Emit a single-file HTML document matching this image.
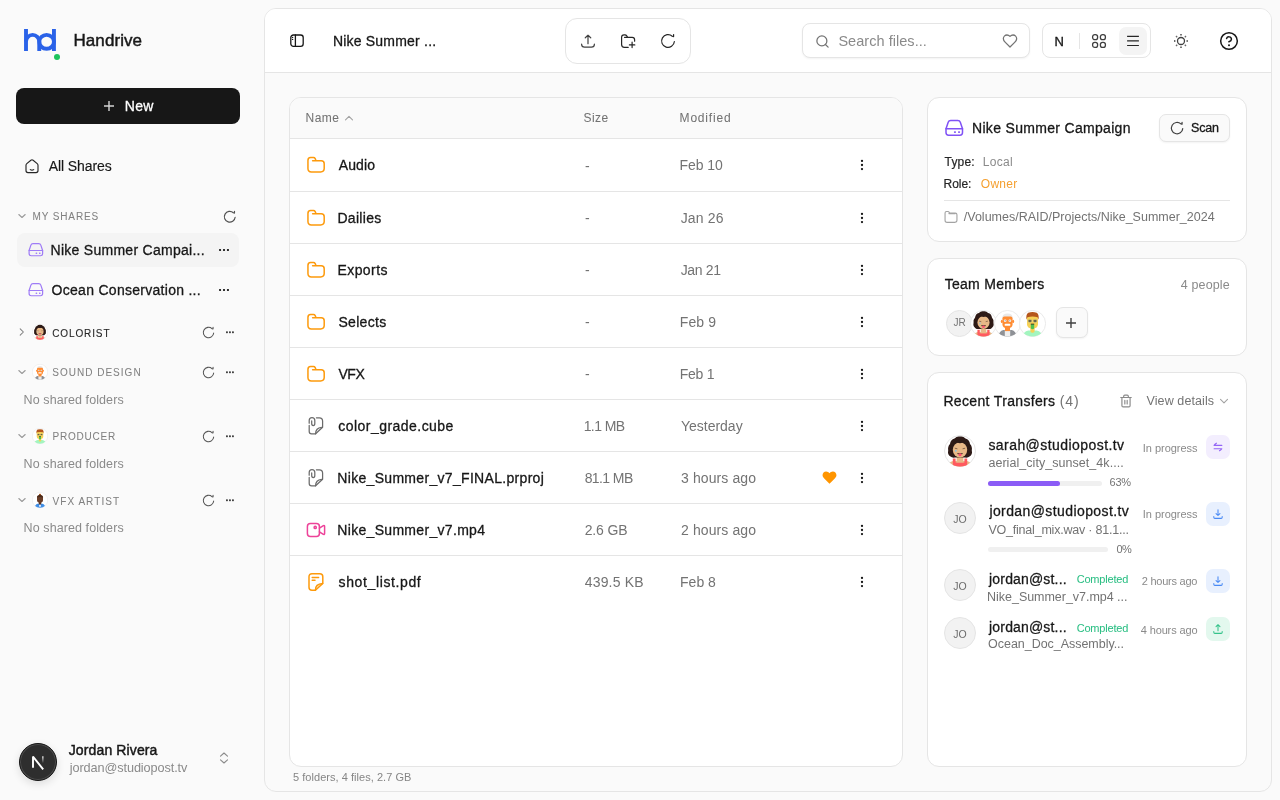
<!DOCTYPE html>
<html><head><meta charset="utf-8">
<style>
*{box-sizing:border-box;margin:0;padding:0}
html,body{width:1280px;height:800px;overflow:hidden}
body{background:#fafafa;font-family:"Liberation Sans",sans-serif;color:#171717;position:relative}
.a{position:absolute}
.t{position:absolute;white-space:nowrap;height:20px;line-height:20px}
svg{position:absolute;overflow:visible}
.ic{fill:none;stroke:currentColor;stroke-linecap:round;stroke-linejoin:round}
</style></head><body style="will-change:transform">

<svg width="0" height="0" style="position:absolute">
<defs>
<symbol id="drv" viewBox="0 0 26 24"><g fill="none" stroke="currentColor" stroke-linecap="round" stroke-linejoin="round"><path d="M5 12.8L7.2 6.3Q7.8 4.5 9.7 4.5H16.8Q18.7 4.5 19.3 6.3L21.5 12.8V16.6Q21.5 19.2 18.9 19.2H7.6Q5 19.2 5 16.6Z"/><path d="M5 12.8H21.5"/><path d="M13.8 16.1h.3M17.9 16.1h.3" stroke-width="1.9"/></g></symbol>
<symbol id="rf" viewBox="0 0 16 16"><path d="M14.38 8.56A6.4 6.4 0 1 1 12.28 3.24L13.6 3.65V1.5" fill="none" stroke="currentColor" stroke-linecap="round" stroke-linejoin="round"/></symbol>
<clipPath id="cc"><circle cx="16" cy="16" r="15.4"/></clipPath>
<symbol id="av-w" viewBox="0 0 32 32">
 <circle cx="16" cy="16" r="15.5" fill="#fff" stroke="#e3e3e3" stroke-width="0.9"/>
 <g clip-path="url(#cc)">
  <path d="M3.5 32Q4.5 27 9 26H23Q27.5 27 28.5 32Z" fill="#e8b887"/>
  <path d="M8.8 23.5H11.6V27.5H20.4V23.5H23.2V32H8.8Z" fill="#ff5a5f"/>
  <rect x="12.6" y="19" width="6.8" height="8.5" fill="#e8b887"/>
  <path d="M6.5 21.5Q3.2 19.5 4.2 15.5Q3.5 11.5 6 9Q6.5 4.5 10.5 3.5Q13 0.8 16 1.6Q19 0.8 21.5 3.5Q25.5 4.5 26 9Q28.5 11.5 27.8 15.5Q28.8 19.5 25.5 21.5Q24 23 21 22.5L11 22.5Q8 23 6.5 21.5Z" fill="#2d1a16"/>
  <ellipse cx="16" cy="14.8" rx="7.2" ry="7.6" fill="#e8b887"/>
  <path d="M8.8 10.5Q12 6.5 16 8.2Q20 6.5 23.2 10.5Q23 6 16 5.5Q9 6 8.8 10.5Z" fill="#2d1a16"/>
  <path d="M10.8 13.2L13.4 13.8M18.6 13.8L21.2 13.2" stroke="#7a5a44" stroke-width="0.9"/>
  <circle cx="11.8" cy="15.8" r="0.9" fill="#7ec8f2"/>
  <path d="M13 18.2H19L18.2 19.2H13.8Z" fill="#3b2a22"/>
  <ellipse cx="16" cy="19.8" rx="1.6" ry="1.5" fill="#ff4f73"/>
 </g>
</symbol>
<symbol id="av-b" viewBox="0 0 32 32">
 <circle cx="16" cy="16" r="15.5" fill="#fff" stroke="#e3e3e3" stroke-width="0.9"/>
 <g clip-path="url(#cc)">
  <path d="M5 32Q6 25 11 23.8H21Q26 25 27 32Z" fill="#8e9196"/>
  <path d="M12.8 24H19.2V32H12.8Z" fill="#eeeeee"/>
  <rect x="13" y="19" width="6" height="6" fill="#ff8c33"/>
  <path d="M9.8 10Q9.6 4.2 16 4.2Q22.4 4.2 22.2 10Z" fill="#e9e9e9"/>
  <path d="M10 10Q10 7.6 12.4 7.6H19.6Q22 7.6 22 10V17Q22 21.8 16 21.8Q10 21.8 10 17Z" fill="#ff8c33"/>
  <ellipse cx="9.3" cy="13.5" rx="1.2" ry="1.8" fill="#ff8c33"/><ellipse cx="22.7" cy="13.5" rx="1.2" ry="1.8" fill="#ff8c33"/>
  <ellipse cx="13.2" cy="12.8" rx="1.6" ry="1.4" fill="#fff"/><ellipse cx="18.8" cy="12.8" rx="1.6" ry="1.4" fill="#fff"/>
  <circle cx="13.2" cy="12.8" r="0.6" fill="#4a5a6a"/><circle cx="18.8" cy="12.8" r="0.6" fill="#4a5a6a"/>
  <rect x="12.6" y="16.4" width="6.8" height="2.4" rx="1" fill="#fff"/>
 </g>
</symbol>
<symbol id="av-g" viewBox="0 0 32 32">
 <circle cx="16" cy="16" r="15.5" fill="#fff" stroke="#e3e3e3" stroke-width="0.9"/>
 <g clip-path="url(#cc)">
  <path d="M4 32Q5 25.5 11 24.2H21Q27 25.5 28 32Z" fill="#a3f5bf"/>
  <rect x="13.5" y="19" width="5" height="8" rx="2" fill="#f6d155"/>
  <path d="M9.5 9Q9.5 6 12.5 6H19.5Q22.5 6 22.5 9V17Q22.5 22 16 22Q9.5 22 9.5 17Z" fill="#f6d155"/>
  <path d="M8.8 11.5Q8 5 11 3.2Q16 1.5 21 3.2Q24 5 23.2 11.5L22 8.5Q16 7 10 8.5Z" fill="#b5561c"/>
  <ellipse cx="13" cy="13" rx="2.4" ry="1.7" fill="#5f5b3c" stroke="#f1e4b0" stroke-width="0.5"/><ellipse cx="19" cy="13" rx="2.4" ry="1.7" fill="#5f5b3c" stroke="#f1e4b0" stroke-width="0.5"/>
  <path d="M14 16.5H18V22Q16 23.5 14 22Z" fill="#4fbf4f"/>
  <rect x="14" y="16.2" width="4" height="1" fill="#3b2a22"/>
 </g>
</symbol>
<symbol id="av-v" viewBox="0 0 32 32">
 <circle cx="16" cy="16" r="15.5" fill="#fff" stroke="#e3e3e3" stroke-width="0.9"/>
 <g clip-path="url(#cc)">
  <path d="M5 32Q6 25 11 23.5H21Q26 25 27 32Z" fill="#3f8ee6"/>
  <path d="M14 25H18L17 30H15Z" fill="#ffffff"/>
  <rect x="13.5" y="18" width="5" height="7" fill="#5a3220"/>
  <path d="M14 7.5V4Q16 2.5 18 4V7.5Z" fill="#a0521d"/>
  <path d="M10 11Q10 6 16 6Q22 6 22 11V16Q22 21.5 16 21.5Q10 21.5 10 16Z" fill="#6a3e28"/>
  <path d="M10 11Q10 6 16 6Q22 6 22 11Q16 8.5 10 11Z" fill="#4a2a1a"/>
 </g>
</symbol>
</defs></svg>

<!-- ============ SIDEBAR ============ -->
<svg class="a" style="left:0;top:0" width="80" height="70" viewBox="0 0 80 70">
  <g fill="none" stroke="#2a62e8" stroke-width="3.9">
    <path d="M26 29V51"/>
    <path d="M26 41.6A6.62 6.7 0 0 1 39.25 41.6V51"/>
    <ellipse cx="46.6" cy="41.85" rx="7.35" ry="6.95"/>
    <path d="M53.95 29V51"/>
  </g>
  <circle cx="57" cy="57" r="3" fill="#1ec45c"/>
</svg>
<div class="t" style="left:73.50px;top:31px;font-size:17px;letter-spacing:0.071px;-webkit-text-stroke:0.45px">Handrive</div>

<div class="a" style="left:16px;top:88px;width:224px;height:36px;background:#171717;border-radius:8px"></div>
<svg style="left:103px;top:100px" width="12" height="12" viewBox="0 0 12 12"><path d="M6 1V11M1 6H11" stroke="#d4d4d4" stroke-width="1.4" fill="none"/></svg>
<div class="t" style="left:124.70px;top:96px;font-size:14px;color:#fff;letter-spacing:0.350px;-webkit-text-stroke:0.3px">New</div>

<svg class="ic" style="left:24px;top:158px;color:#262626" width="16" height="16" viewBox="0 0 16 16" stroke-width="1.15">
  <path d="M2 7.2Q2 6.3 2.8 5.6L6.9 2.2Q8 1.3 9.1 2.2L13.2 5.6Q14 6.3 14 7.2V12.6Q14 14.6 12 14.6H4Q2 14.6 2 12.6Z"/>
  <path d="M6.3 11.6Q8 12.8 9.7 11.6"/>
</svg>
<div class="t" style="left:48.80px;top:156px;font-size:14px;letter-spacing:-0.100px;-webkit-text-stroke:0.15px">All Shares</div>

<!-- MY SHARES -->
<svg class="ic" style="left:17px;top:212px;color:#999" width="10" height="10" viewBox="0 0 10 10" stroke-width="1.05"><path d="M1.8 2.5L5 5.5L8.2 2.5"/></svg>
<div class="t" style="left:32.50px;top:207px;font-size:10px;letter-spacing:0.875px;color:#808080;-webkit-text-stroke:0.05px">MY SHARES</div>
<svg style="left:223.25px;top:209.75px;color:#525252;stroke-width:1.4" width="13.5" height="13.5" viewBox="0 0 16 16"><use href="#rf"/></svg>

<div class="a" style="left:17px;top:233px;width:222px;height:34px;background:#f4f4f4;border-radius:8px"></div>
<svg style="left:24.9px;top:240.4px;color:#9f7cf6;stroke-width:1.5" width="21.3" height="19.7" viewBox="0 0 26 24"><use href="#drv"/></svg>
<div class="t" style="left:50.60px;top:240px;font-size:14px;letter-spacing:0.270px;-webkit-text-stroke:0.3px">Nike Summer Campai...</div>
<svg style="left:218px;top:248px" width="12" height="4" viewBox="0 0 12 4"><rect x="1" y="1" width="2.1" height="2.1" rx="0.8" fill="#171717"/><rect x="4.95" y="1" width="2.1" height="2.1" rx="0.8" fill="#171717"/><rect x="8.9" y="1" width="2.1" height="2.1" rx="0.8" fill="#171717"/></svg>

<svg style="left:24.9px;top:280.4px;color:#9f7cf6;stroke-width:1.5" width="21.3" height="19.7" viewBox="0 0 26 24"><use href="#drv"/></svg>
<div class="t" style="left:51.60px;top:280px;font-size:14px;letter-spacing:0.281px;-webkit-text-stroke:0.3px">Ocean Conservation ...</div>
<svg style="left:218px;top:288px" width="12" height="4" viewBox="0 0 12 4"><rect x="1" y="1" width="2.1" height="2.1" rx="0.8" fill="#171717"/><rect x="4.95" y="1" width="2.1" height="2.1" rx="0.8" fill="#171717"/><rect x="8.9" y="1" width="2.1" height="2.1" rx="0.8" fill="#171717"/></svg>


<!-- COLORIST -->
<svg class="ic" style="left:17px;top:327px;color:#808080" width="10" height="10" viewBox="0 0 10 10" stroke-width="1.05"><path d="M3.2 1.8L6.4 5L3.2 8.2"/></svg>
<div class="a" style="left:32px;top:324px;width:16px;height:16px" id="av-col"><svg width="16" height="16" viewBox="0 0 32 32" style="left:0;top:0"><use href="#av-w"/></svg></div>
<div class="t" style="left:52.20px;top:324px;font-size:10px;letter-spacing:0.886px;color:#262626;-webkit-text-stroke:0.1px">COLORIST</div>
<svg style="left:201.50px;top:325.50px;color:#525252;stroke-width:1.3" width="13" height="13" viewBox="0 0 16 16"><use href="#rf"/></svg>
<svg style="left:225px;top:331px" width="10" height="3" viewBox="0 0 10 3"><rect x="1.05" y="0.35" width="1.8" height="1.8" rx="0.6" fill="#333"/><rect x="4.05" y="0.35" width="1.8" height="1.8" rx="0.6" fill="#333"/><rect x="7.05" y="0.35" width="1.8" height="1.8" rx="0.6" fill="#333"/></svg>

<!-- SOUND DESIGN -->
<svg class="ic" style="left:17px;top:368px;color:#999" width="10" height="10" viewBox="0 0 10 10" stroke-width="1.05"><path d="M1.8 2.5L5 5.5L8.2 2.5"/></svg>
<div class="a" style="left:32px;top:364px;width:16px;height:16px" id="av-snd"><svg width="16" height="16" viewBox="0 0 32 32" style="left:0;top:0"><use href="#av-b"/></svg></div>
<div class="t" style="left:52.20px;top:363px;font-size:10px;letter-spacing:1.018px;color:#808080;-webkit-text-stroke:0.05px">SOUND DESIGN</div>
<svg style="left:201.50px;top:365.50px;color:#525252;stroke-width:1.3" width="13" height="13" viewBox="0 0 16 16"><use href="#rf"/></svg>
<svg style="left:225px;top:371px" width="10" height="3" viewBox="0 0 10 3"><rect x="1.05" y="0.35" width="1.8" height="1.8" rx="0.6" fill="#333"/><rect x="4.05" y="0.35" width="1.8" height="1.8" rx="0.6" fill="#333"/><rect x="7.05" y="0.35" width="1.8" height="1.8" rx="0.6" fill="#333"/></svg>
<div class="t" style="left:23.60px;top:390px;font-size:12.5px;color:#8a8a8a;letter-spacing:0.088px">No shared folders</div>

<!-- PRODUCER -->
<svg class="ic" style="left:17px;top:432px;color:#999" width="10" height="10" viewBox="0 0 10 10" stroke-width="1.05"><path d="M1.8 2.5L5 5.5L8.2 2.5"/></svg>
<div class="a" style="left:32px;top:428px;width:16px;height:16px" id="av-prd"><svg width="16" height="16" viewBox="0 0 32 32" style="left:0;top:0"><use href="#av-g"/></svg></div>
<div class="t" style="left:52.50px;top:427px;font-size:10px;letter-spacing:0.786px;color:#808080;-webkit-text-stroke:0.05px">PRODUCER</div>
<svg style="left:201.50px;top:429.50px;color:#525252;stroke-width:1.3" width="13" height="13" viewBox="0 0 16 16"><use href="#rf"/></svg>
<svg style="left:225px;top:435px" width="10" height="3" viewBox="0 0 10 3"><rect x="1.05" y="0.35" width="1.8" height="1.8" rx="0.6" fill="#333"/><rect x="4.05" y="0.35" width="1.8" height="1.8" rx="0.6" fill="#333"/><rect x="7.05" y="0.35" width="1.8" height="1.8" rx="0.6" fill="#333"/></svg>
<div class="t" style="left:23.60px;top:454px;font-size:12.5px;color:#8a8a8a;letter-spacing:0.088px">No shared folders</div>

<!-- VFX ARTIST -->
<svg class="ic" style="left:17px;top:496px;color:#999" width="10" height="10" viewBox="0 0 10 10" stroke-width="1.05"><path d="M1.8 2.5L5 5.5L8.2 2.5"/></svg>
<div class="a" style="left:32px;top:492px;width:16px;height:16px" id="av-vfx"><svg width="16" height="16" viewBox="0 0 32 32" style="left:0;top:0"><use href="#av-v"/></svg></div>
<div class="t" style="left:52.50px;top:492px;font-size:10px;letter-spacing:1.056px;color:#808080;-webkit-text-stroke:0.05px">VFX ARTIST</div>
<svg style="left:201.50px;top:493.50px;color:#525252;stroke-width:1.3" width="13" height="13" viewBox="0 0 16 16"><use href="#rf"/></svg>
<svg style="left:225px;top:499px" width="10" height="3" viewBox="0 0 10 3"><rect x="1.05" y="0.35" width="1.8" height="1.8" rx="0.6" fill="#333"/><rect x="4.05" y="0.35" width="1.8" height="1.8" rx="0.6" fill="#333"/><rect x="7.05" y="0.35" width="1.8" height="1.8" rx="0.6" fill="#333"/></svg>
<div class="t" style="left:23.60px;top:518px;font-size:12.5px;color:#8a8a8a;letter-spacing:0.088px">No shared folders</div>

<!-- USER -->
<div class="a" style="left:19px;top:743px;width:38px;height:38px;border-radius:50%;background:#2e2e2e;border:1px solid #161616;box-shadow:inset 0 0 0 1px #4d4d4d,0 3px 8px rgba(0,0,0,0.12)"></div>
<svg style="left:28px;top:752px" width="20" height="20" viewBox="0 0 20 20"><defs><linearGradient id="ng" x1="0" y1="0" x2="0" y2="1"><stop offset="0" stop-color="#fff"/><stop offset="1" stop-color="#fff" stop-opacity="0"/></linearGradient></defs><path d="M5 15.7V4.6L15.2 17.3" stroke="#fff" stroke-width="1.9" stroke-linejoin="bevel" fill="none"/><rect x="14.2" y="4.3" width="1.3" height="6.8" fill="url(#ng)"/></svg>
<div class="t" style="left:68.75px;top:740px;font-size:14px;letter-spacing:0.121px;-webkit-text-stroke:0.45px">Jordan Rivera</div>
<div class="t" style="left:69.75px;top:758px;font-size:12.7px;color:#8a8a8a;letter-spacing:-0.092px">jordan@studiopost.tv</div>
<svg class="ic" style="left:218px;top:752px;color:#8a8a8a" width="12" height="12" viewBox="0 0 12 12" stroke-width="1.1"><path d="M2.5 4.2L6 1L9.5 4.2M2.5 7.8L6 11L9.5 7.8"/></svg>

<!-- ============ MAIN PANEL ============ -->
<div class="a" style="left:264px;top:8px;width:1008px;height:784px;border:1px solid #e5e5e5;border-radius:12px;background:#fafafa"></div>
<div class="a" style="left:265px;top:9px;width:1006px;height:64px;background:#fff;border-bottom:1px solid #e5e5e5;border-radius:11px 11px 0 0"></div>

<svg class="ic" style="left:289px;top:33px;color:#171717" width="16" height="16" viewBox="0 0 16 16" stroke-width="1.3">
  <rect x="1.8" y="2" width="12.4" height="11.4" rx="2.6"/><path d="M6.4 2V13.4"/><path d="M3.6 4.4h.01M3.6 6.4h.01" stroke-width="1.4"/>
</svg>
<div class="t" style="left:332.90px;top:31px;font-size:14px;letter-spacing:0.207px;-webkit-text-stroke:0.3px">Nike Summer ...</div>

<div class="a" style="left:565px;top:18px;width:126px;height:46px;border:1px solid #e5e5e5;border-radius:12px;background:#fff"></div>
<svg class="ic" style="left:580px;top:33px;color:#404040" width="16" height="16" viewBox="0 0 16 16" stroke-width="1.2">
  <path d="M8 10.7V2.4M5.2 4.9Q6.6 3.2 8 2.2Q9.4 3.2 10.8 4.9"/><path d="M1.6 11.2Q1.6 14.2 4.6 14.2H11.4Q14.4 14.2 14.4 11.2"/>
</svg>
<svg class="ic" style="left:620px;top:33px;color:#262626" width="16" height="16" viewBox="0 0 16 16" stroke-width="1.2">
  <path d="M7.6 4.4L6.7 2.9Q6.1 1.9 4.9 1.9H4Q1.6 1.9 1.6 4.3V11.6Q1.6 14.4 4.4 14.4H8.2"/><path d="M4.6 4.4H12.2Q14.6 4.4 14.6 6.8V8.2"/><path d="M12.1 9.2V14.6M9.4 11.9H14.8"/>
</svg>
<svg style="left:660.00px;top:32.90px;color:#262626;stroke-width:1.2" width="16" height="16" viewBox="0 0 16 16"><use href="#rf"/></svg>

<div class="a" style="left:802px;top:23px;width:228px;height:35px;border:1px solid #e5e5e5;border-radius:8px;background:#fff;box-shadow:0 1px 2px rgba(0,0,0,0.05)"></div>
<svg class="ic" style="left:815px;top:34px;color:#737373" width="15" height="15" viewBox="0 0 24 24" stroke-width="2"><circle cx="11" cy="11" r="8"/><path d="m21 21-4.3-4.3"/></svg>
<div class="t" style="left:838.40px;top:31px;font-size:14.5px;color:#8a8a8a;letter-spacing:0.043px">Search files...</div>
<svg class="ic" style="left:1002px;top:33px;color:#737373" width="16" height="16" viewBox="0 0 24 24" stroke-width="1.9"><path d="M19 14c1.49-1.46 3-3.21 3-5.5A5.5 5.5 0 0 0 16.5 3c-1.76 0-3 .5-4.5 2-1.5-1.5-2.74-2-4.5-2A5.5 5.5 0 0 0 2 8.5c0 2.3 1.5 4.05 3 5.5l7 7Z"/></svg>

<div class="a" style="left:1042px;top:23px;width:109px;height:35px;border:1px solid #e5e5e5;border-radius:8px;background:#fff"></div>
<div class="t" style="left:1054.60px;top:32px;font-size:13px;-webkit-text-stroke:0.35px">N</div>
<div class="a" style="left:1079px;top:33px;width:1px;height:16px;background:#e5e5e5"></div>
<svg class="ic" style="left:1091px;top:33px;color:#404040" width="16" height="16" viewBox="0 0 16 16" stroke-width="1.3">
  <rect x="1.6" y="1.6" width="5" height="5" rx="2.2"/><rect x="9.4" y="1.6" width="5" height="5" rx="2.2"/><rect x="1.6" y="9.4" width="5" height="5" rx="2.2"/><rect x="9.4" y="9.4" width="5" height="5" rx="2.2"/>
</svg>
<div class="a" style="left:1119px;top:27px;width:28px;height:28px;border-radius:7px;background:#f4f4f4"></div>
<svg class="ic" style="left:1125px;top:33px;color:#262626;stroke-linecap:butt" width="16" height="16" viewBox="0 0 16 16" stroke-width="1.2"><path d="M2.1 3.4H13.9M2.1 7.9H13.9M2.1 12.5H13.9" style="stroke-linecap:butt"/></svg>

<svg class="ic" style="left:1173px;top:33px;color:#404040" width="16" height="16" viewBox="0 0 16 16" stroke-width="1.3">
  <circle cx="8" cy="8" r="3.5"/><path d="M7.8 1.7h.4M7.8 14.2h.4M1.7 7.8v.4M14.2 7.8v.4M3.5 3.5l.2.2M12.3 12.3l.2.2M3.5 12.5l.2-.2M12.3 3.7l.2-.2" stroke-width="1.4" style="stroke-linecap:square;stroke:#6a6a6a"/>
</svg>
<svg class="ic" style="left:1219px;top:31px;color:#171717" width="20" height="20" viewBox="0 0 24 24" stroke-width="1.8"><circle cx="12" cy="12" r="10"/><path d="M9.09 9a3 3 0 0 1 5.83 1c0 2-3 3-3 3"/><path d="M12 17h.01" stroke-width="2.4"/></svg>


<!-- ============ TABLE ============ -->
<div class="a" style="left:289px;top:97px;width:614px;height:670px;border:1px solid #e5e5e5;border-radius:12px;background:#fff;overflow:hidden"><div class="a" style="left:0;top:0;width:612px;height:41px;background:#fafafa;border-bottom:1px solid #e5e5e5"></div></div>
<div class="t" style="left:305.50px;top:108px;font-size:12px;color:#737373;letter-spacing:0.500px;-webkit-text-stroke:0.05px">Name</div>
<svg class="ic" style="left:344px;top:114px;color:#a3a3a3" width="10" height="8" viewBox="0 0 10 8" stroke-width="1.1"><path d="M1.5 5.8L5 2.3L8.5 5.8"/></svg>
<div class="t" style="left:583.50px;top:108px;font-size:12px;color:#737373;letter-spacing:0.433px;-webkit-text-stroke:0.05px">Size</div>
<div class="t" style="left:679.60px;top:108px;font-size:12px;color:#737373;letter-spacing:0.800px;-webkit-text-stroke:0.05px">Modified</div>
<div class="a" style="left:290px;top:191px;width:612px;height:1px;background:#e5e5e5"></div>
<svg class="ic" style="left:303px;top:153px;color:#fd9a0c" width="26" height="24" viewBox="0 0 26 24" stroke-width="1.5"><path d="M13 7.8L12.2 5.6Q11.6 4.5 10.5 4.5H7.5Q4.95 4.5 4.95 7.5V15.4Q4.95 18.7 8.4 18.9Q13 19.3 17.6 18.9Q21.2 18.6 21.2 15.4V10.8Q21.2 7.8 18.2 7.8H9.6"/></svg>
<div class="t" style="left:338.75px;top:155px;font-size:14px;letter-spacing:0.125px;-webkit-text-stroke:0.3px">Audio</div>
<div class="t" style="left:585.00px;top:156px;font-size:14px;color:#737373">-</div>
<div class="t" style="left:679.60px;top:155px;font-size:14px;color:#737373;letter-spacing:-0.060px">Feb 10</div>
<svg style="left:860px;top:159px" width="4" height="12" viewBox="0 0 4 12"><circle cx="2" cy="1.9" r="1.15" fill="#171717"/><circle cx="2" cy="6" r="1.15" fill="#171717"/><circle cx="2" cy="10.1" r="1.15" fill="#171717"/></svg>
<div class="a" style="left:290px;top:243px;width:612px;height:1px;background:#e5e5e5"></div>
<svg class="ic" style="left:303px;top:206px;color:#fd9a0c" width="26" height="24" viewBox="0 0 26 24" stroke-width="1.5"><path d="M13 7.8L12.2 5.6Q11.6 4.5 10.5 4.5H7.5Q4.95 4.5 4.95 7.5V15.4Q4.95 18.7 8.4 18.9Q13 19.3 17.6 18.9Q21.2 18.6 21.2 15.4V10.8Q21.2 7.8 18.2 7.8H9.6"/></svg>
<div class="t" style="left:337.40px;top:208px;font-size:14px;letter-spacing:0.317px;-webkit-text-stroke:0.3px">Dailies</div>
<div class="t" style="left:585.00px;top:208px;font-size:14px;color:#737373">-</div>
<div class="t" style="left:680.70px;top:208px;font-size:14px;color:#737373;letter-spacing:0.160px">Jan 26</div>
<svg style="left:860px;top:212px" width="4" height="12" viewBox="0 0 4 12"><circle cx="2" cy="1.9" r="1.15" fill="#171717"/><circle cx="2" cy="6" r="1.15" fill="#171717"/><circle cx="2" cy="10.1" r="1.15" fill="#171717"/></svg>
<div class="a" style="left:290px;top:295px;width:612px;height:1px;background:#e5e5e5"></div>
<svg class="ic" style="left:303px;top:258px;color:#fd9a0c" width="26" height="24" viewBox="0 0 26 24" stroke-width="1.5"><path d="M13 7.8L12.2 5.6Q11.6 4.5 10.5 4.5H7.5Q4.95 4.5 4.95 7.5V15.4Q4.95 18.7 8.4 18.9Q13 19.3 17.6 18.9Q21.2 18.6 21.2 15.4V10.8Q21.2 7.8 18.2 7.8H9.6"/></svg>
<div class="t" style="left:337.40px;top:260px;font-size:14px;letter-spacing:0.450px;-webkit-text-stroke:0.3px">Exports</div>
<div class="t" style="left:585.00px;top:260px;font-size:14px;color:#737373">-</div>
<div class="t" style="left:680.70px;top:260px;font-size:14px;color:#737373;letter-spacing:-0.320px">Jan 21</div>
<svg style="left:860px;top:264px" width="4" height="12" viewBox="0 0 4 12"><circle cx="2" cy="1.9" r="1.15" fill="#171717"/><circle cx="2" cy="6" r="1.15" fill="#171717"/><circle cx="2" cy="10.1" r="1.15" fill="#171717"/></svg>
<div class="a" style="left:290px;top:347px;width:612px;height:1px;background:#e5e5e5"></div>
<svg class="ic" style="left:303px;top:310px;color:#fd9a0c" width="26" height="24" viewBox="0 0 26 24" stroke-width="1.5"><path d="M13 7.8L12.2 5.6Q11.6 4.5 10.5 4.5H7.5Q4.95 4.5 4.95 7.5V15.4Q4.95 18.7 8.4 18.9Q13 19.3 17.6 18.9Q21.2 18.6 21.2 15.4V10.8Q21.2 7.8 18.2 7.8H9.6"/></svg>
<div class="t" style="left:338.40px;top:312px;font-size:14px;letter-spacing:0.333px;-webkit-text-stroke:0.3px">Selects</div>
<div class="t" style="left:585.00px;top:312px;font-size:14px;color:#737373">-</div>
<div class="t" style="left:679.70px;top:312px;font-size:14px;color:#737373;letter-spacing:0.150px">Feb 9</div>
<svg style="left:860px;top:316px" width="4" height="12" viewBox="0 0 4 12"><circle cx="2" cy="1.9" r="1.15" fill="#171717"/><circle cx="2" cy="6" r="1.15" fill="#171717"/><circle cx="2" cy="10.1" r="1.15" fill="#171717"/></svg>
<div class="a" style="left:290px;top:399px;width:612px;height:1px;background:#e5e5e5"></div>
<svg class="ic" style="left:303px;top:362px;color:#fd9a0c" width="26" height="24" viewBox="0 0 26 24" stroke-width="1.5"><path d="M13 7.8L12.2 5.6Q11.6 4.5 10.5 4.5H7.5Q4.95 4.5 4.95 7.5V15.4Q4.95 18.7 8.4 18.9Q13 19.3 17.6 18.9Q21.2 18.6 21.2 15.4V10.8Q21.2 7.8 18.2 7.8H9.6"/></svg>
<div class="t" style="left:338.40px;top:364px;font-size:14px;letter-spacing:-0.450px;-webkit-text-stroke:0.3px">VFX</div>
<div class="t" style="left:585.00px;top:364px;font-size:14px;color:#737373">-</div>
<div class="t" style="left:679.70px;top:364px;font-size:14px;color:#737373;letter-spacing:-0.250px">Feb 1</div>
<svg style="left:860px;top:368px" width="4" height="12" viewBox="0 0 4 12"><circle cx="2" cy="1.9" r="1.15" fill="#171717"/><circle cx="2" cy="6" r="1.15" fill="#171717"/><circle cx="2" cy="10.1" r="1.15" fill="#171717"/></svg>
<div class="a" style="left:290px;top:451px;width:612px;height:1px;background:#e5e5e5"></div>
<svg class="ic" style="left:306px;top:416px;color:#6b6b6b" width="20" height="20" viewBox="0 0 20 20" stroke-width="1.25"><path d="M3.2 7.2V4.6Q3.2 1.6 6 1.6Q8.8 1.6 8.8 4.6V7.6Q8.8 9.7 7.25 9.7Q5.7 9.7 5.7 7.6V4.9"/><path d="M3.2 9.4V15.4Q3.2 17.8 5.6 17.8H9.6L16.6 11.2V5Q16.6 1.8 13.4 1.8H10.4"/><path d="M9.6 17.8Q9.6 12 15.6 11.4"/></svg>
<div class="t" style="left:338.30px;top:416px;font-size:14px;letter-spacing:0.460px;-webkit-text-stroke:0.3px">color_grade.cube</div>
<div class="t" style="left:583.70px;top:416px;font-size:14px;color:#737373;letter-spacing:-0.600px">1.1 MB</div>
<div class="t" style="left:681.00px;top:416px;font-size:14px;color:#737373;letter-spacing:-0.013px">Yesterday</div>
<svg style="left:860px;top:420px" width="4" height="12" viewBox="0 0 4 12"><circle cx="2" cy="1.9" r="1.15" fill="#171717"/><circle cx="2" cy="6" r="1.15" fill="#171717"/><circle cx="2" cy="10.1" r="1.15" fill="#171717"/></svg>
<div class="a" style="left:290px;top:503px;width:612px;height:1px;background:#e5e5e5"></div>
<svg class="ic" style="left:306px;top:468px;color:#6b6b6b" width="20" height="20" viewBox="0 0 20 20" stroke-width="1.25"><path d="M3.2 7.2V4.6Q3.2 1.6 6 1.6Q8.8 1.6 8.8 4.6V7.6Q8.8 9.7 7.25 9.7Q5.7 9.7 5.7 7.6V4.9"/><path d="M3.2 9.4V15.4Q3.2 17.8 5.6 17.8H9.6L16.6 11.2V5Q16.6 1.8 13.4 1.8H10.4"/><path d="M9.6 17.8Q9.6 12 15.6 11.4"/></svg>
<div class="t" style="left:337.30px;top:468px;font-size:14px;letter-spacing:0.312px;-webkit-text-stroke:0.3px">Nike_Summer_v7_FINAL.prproj</div>
<div class="t" style="left:584.70px;top:468px;font-size:14px;color:#737373;letter-spacing:-0.600px">81.1 MB</div>
<div class="t" style="left:681.00px;top:468px;font-size:14px;color:#737373;letter-spacing:0.100px">3 hours ago</div>
<svg style="left:822px;top:471px" width="15" height="13" viewBox="0 0 24 21"><path d="M12 20.5L3.5 12.2C1.5 10.2 0.8 8.6 0.8 6.6C0.8 3.4 3.3 0.8 6.5 0.8C8.8 0.8 10.6 2 12 3.8C13.4 2 15.2 0.8 17.5 0.8C20.7 0.8 23.2 3.4 23.2 6.6C23.2 8.6 22.5 10.2 20.5 12.2Z" fill="#ff9500"/></svg>
<svg style="left:860px;top:472px" width="4" height="12" viewBox="0 0 4 12"><circle cx="2" cy="1.9" r="1.15" fill="#171717"/><circle cx="2" cy="6" r="1.15" fill="#171717"/><circle cx="2" cy="10.1" r="1.15" fill="#171717"/></svg>
<div class="a" style="left:290px;top:555px;width:612px;height:1px;background:#e5e5e5"></div>
<svg class="ic" style="left:306px;top:521px;color:#ed4399" width="20" height="18" viewBox="0 0 20 18" stroke-width="1.5"><rect x="1.4" y="2.4" width="12" height="13" rx="3"/><path d="M13.4 7.2L17.4 4.6Q18.6 4.2 18.6 5.4V12.6Q18.6 13.8 17.4 13.4L13.4 10.8"/><circle cx="9.2" cy="6.4" r="1.1"/></svg>
<div class="t" style="left:337.30px;top:520px;font-size:14px;letter-spacing:0.312px;-webkit-text-stroke:0.3px">Nike_Summer_v7.mp4</div>
<div class="t" style="left:584.70px;top:520px;font-size:14px;color:#737373;letter-spacing:-0.140px">2.6 GB</div>
<div class="t" style="left:681.00px;top:520px;font-size:14px;color:#737373;letter-spacing:0.100px">2 hours ago</div>
<svg style="left:860px;top:524px" width="4" height="12" viewBox="0 0 4 12"><circle cx="2" cy="1.9" r="1.15" fill="#171717"/><circle cx="2" cy="6" r="1.15" fill="#171717"/><circle cx="2" cy="10.1" r="1.15" fill="#171717"/></svg>
<svg class="ic" style="left:306px;top:572px;color:#fd9a0c" width="20" height="20" viewBox="0 0 20 20" stroke-width="1.5"><path d="M9.4 18.2H6Q3 18.2 3 15.2V4.8Q3 1.8 6 1.8H13.8Q16.8 1.8 16.8 4.8V11.4Z"/><path d="M9.4 18.2Q9.4 12 16.6 11.6"/><path d="M6.2 5.4H12.6M6.2 8.2H9"/></svg>
<div class="t" style="left:338.60px;top:572px;font-size:14px;letter-spacing:0.617px;-webkit-text-stroke:0.3px">shot_list.pdf</div>
<div class="t" style="left:584.70px;top:572px;font-size:14px;color:#737373;letter-spacing:0.186px">439.5 KB</div>
<div class="t" style="left:680.00px;top:572px;font-size:14px;color:#737373;letter-spacing:0.025px">Feb 8</div>
<svg style="left:860px;top:576px" width="4" height="12" viewBox="0 0 4 12"><circle cx="2" cy="1.9" r="1.15" fill="#171717"/><circle cx="2" cy="6" r="1.15" fill="#171717"/><circle cx="2" cy="10.1" r="1.15" fill="#171717"/></svg>
<div class="t" style="left:293.00px;top:767px;font-size:11px;color:#858585;letter-spacing:0.040px">5 folders, 4 files, 2.7 GB</div>

<!-- ============ RIGHT PANEL ============ -->
<div class="a" style="left:927px;top:97px;width:320px;height:145px;border:1px solid #e5e5e5;border-radius:12px;background:#fff"></div>
<svg style="left:941px;top:116px;color:#8052f5;stroke-width:1.5" width="26" height="24" viewBox="0 0 26 24"><use href="#drv"/></svg>
<div class="t" style="left:972.00px;top:118px;font-size:14px;letter-spacing:0.316px;-webkit-text-stroke:0.3px">Nike Summer Campaign</div>
<div class="a" style="left:1159px;top:114px;width:71px;height:28px;border:1px solid #e5e5e5;border-radius:7px;background:#fafafa;box-shadow:0 1px 2px rgba(0,0,0,0.05)"></div>
<svg style="left:1169.90px;top:120.90px;color:#404040;stroke-width:1.35" width="14.2" height="14.2" viewBox="0 0 16 16"><use href="#rf"/></svg>
<div class="t" style="left:1191.00px;top:118px;font-size:12.5px;letter-spacing:-0.200px;-webkit-text-stroke:0.3px">Scan</div>
<div class="t" style="left:944.60px;top:152px;font-size:12px;color:#262626;letter-spacing:0.175px;-webkit-text-stroke:0.2px">Type:</div>
<div class="t" style="left:982.70px;top:152px;font-size:12px;color:#8a8a8a;letter-spacing:0.350px">Local</div>
<div class="t" style="left:943.60px;top:174px;font-size:12px;color:#262626;letter-spacing:-0.050px;-webkit-text-stroke:0.2px">Role:</div>
<div class="t" style="left:980.80px;top:174px;font-size:12px;color:#f5a030;letter-spacing:0.275px">Owner</div>
<div class="a" style="left:944px;top:200px;width:286px;height:1px;background:#e5e5e5"></div>
<svg class="ic" style="left:944px;top:210px;color:#a3a3a3" width="14" height="14" viewBox="0 0 20 18" stroke-width="1.6"><path d="M1.5 5.2V3.4Q1.5 1.2 3.7 1.2H5.6Q6.8 1.2 7.4 2.2L8 3.4H16.2Q18.5 3.4 18.5 5.8V13.8Q18.5 16.6 15.6 16.6H4.5Q1.5 16.6 1.5 13.6Z"/><path d="M7 4.1H16"/></svg>
<div class="t" style="left:963.80px;top:207px;font-size:12.5px;color:#737373">/Volumes/RAID/Projects/Nike_Summer_2024</div>

<div class="a" style="left:927px;top:258px;width:320px;height:98px;border:1px solid #e5e5e5;border-radius:12px;background:#fff"></div>
<div class="t" style="left:944.70px;top:274px;font-size:14px;letter-spacing:0.282px;-webkit-text-stroke:0.3px">Team Members</div>
<div class="t" style="left:1180.80px;top:275px;font-size:12.5px;color:#8a8a8a;letter-spacing:0.129px">4 people</div>
<div class="a" style="left:946px;top:310px;width:27px;height:27px;border-radius:50%;background:#f2f2f2;border:1px solid #e5e5e5"></div>
<div class="t" style="left:946px;top:313px;width:27px;text-align:center;font-size:10px;color:#737373">JR</div>
<div class="a" style="left:970px;top:310px;width:27px;height:27px" id="tm-a1"><svg width="27" height="27" viewBox="0 0 32 32" style="left:0;top:0"><use href="#av-w"/></svg></div>
<div class="a" style="left:994px;top:310px;width:27px;height:27px" id="tm-a2"><svg width="27" height="27" viewBox="0 0 32 32" style="left:0;top:0"><use href="#av-b"/></svg></div>
<div class="a" style="left:1019px;top:310px;width:27px;height:27px" id="tm-a3"><svg width="27" height="27" viewBox="0 0 32 32" style="left:0;top:0"><use href="#av-g"/></svg></div>
<div class="a" style="left:1056px;top:307px;width:32px;height:31px;border:1px solid #e5e5e5;border-radius:7px;background:#fafafa;box-shadow:0 1px 2px rgba(0,0,0,0.05)"></div>
<svg style="left:1065px;top:317px" width="12" height="12" viewBox="0 0 12 12"><path d="M6 1V11M1 6H11" stroke="#404040" stroke-width="1.4"/></svg>

<div class="a" style="left:927px;top:372px;width:320px;height:395px;border:1px solid #e5e5e5;border-radius:12px;background:#fff"></div>
<div class="t" style="left:943.40px;top:391px;font-size:14px;letter-spacing:0.340px;-webkit-text-stroke:0.3px">Recent Transfers</div>
<div class="t" style="left:1059.80px;top:391px;font-size:14px;color:#737373;letter-spacing:0.900px">(4)</div>
<svg class="ic" style="left:1119px;top:394px;color:#8a8a8a" width="14" height="14" viewBox="0 0 24 24" stroke-width="2"><path d="M3 6h18"/><path d="M19 6v14c0 1-1 2-2 2H7c-1 0-2-1-2-2V6"/><path d="M8 6V4c0-1 1-2 2-2h4c1 0 2 1 2 2v2"/><path d="M10 11v6M14 11v6"/></svg>
<div class="t" style="left:1146.50px;top:391px;font-size:12.5px;color:#737373;letter-spacing:0.100px">View details</div>
<svg class="ic" style="left:1219px;top:397px;color:#a3a3a3" width="10" height="8" viewBox="0 0 10 8" stroke-width="1.1"><path d="M1.5 2.3L5 5.8L8.5 2.3"/></svg>

<!-- t1 -->
<div class="a" style="left:944px;top:435px;width:32px;height:32px" id="tr-a1"><svg width="32" height="32" viewBox="0 0 32 32" style="left:0;top:0"><use href="#av-w"/></svg></div>
<div class="t" style="left:988.40px;top:435px;font-size:14px;letter-spacing:0.439px;-webkit-text-stroke:0.28px">sarah@studiopost.tv</div>
<div class="t" style="left:988.40px;top:453px;font-size:12.5px;color:#737373;letter-spacing:0.050px">aerial_city_sunset_4k....</div>
<div class="a" style="left:988px;top:481px;width:114px;height:5px;border-radius:3px;background:#f0f0f0"><div style="width:72px;height:5px;border-radius:3px;background:#8b5cf6"></div></div>
<div class="t" style="left:1109.60px;top:472px;font-size:11px;color:#737373;letter-spacing:-0.300px">63%</div>
<div class="t" style="left:1142.80px;top:438px;font-size:11px;color:#8a8a8a;letter-spacing:-0.030px">In progress</div>
<div class="a" style="left:1206px;top:435px;width:24px;height:24px;border-radius:7px;background:#f3eefe"></div>
<svg class="ic" style="left:1206px;top:435px;color:#9466f6" width="24" height="24" viewBox="0 0 24 24" stroke-width="1.15"><path d="M10.4 8.2Q8.9 9.1 8.1 10.4H15.8M8.1 13.7H15.8Q15 14.9 13.5 15.7"/></svg>

<!-- t2 -->
<div class="a" style="left:944px;top:502px;width:32px;height:32px;border-radius:50%;background:#f2f2f2;border:1px solid #e5e5e5"></div>
<div class="t" style="left:944px;top:509px;width:32px;text-align:center;font-size:10.5px;color:#6b6b6b">JO</div>
<div class="t" style="left:989.40px;top:501px;font-size:14px;letter-spacing:0.405px;-webkit-text-stroke:0.28px">jordan@studiopost.tv</div>
<div class="t" style="left:988.40px;top:520px;font-size:12.5px;color:#737373;letter-spacing:-0.212px">VO_final_mix.wav · 81.1...</div>
<div class="a" style="left:988px;top:547px;width:120px;height:5px;border-radius:3px;background:#f0f0f0"></div>
<div class="t" style="left:1116.50px;top:539px;font-size:11px;color:#737373;letter-spacing:-0.600px">0%</div>
<div class="t" style="left:1142.80px;top:504px;font-size:11px;color:#8a8a8a;letter-spacing:-0.030px">In progress</div>
<div class="a" style="left:1206px;top:502px;width:24px;height:24px;border-radius:7px;background:#e8f0fe"></div>
<svg class="ic" style="left:1212px;top:508px;color:#4a8af4" width="12" height="12" viewBox="0 0 16 16" stroke-width="1.4"><path d="M8 2.2V9.8M5.4 7.4L8 10L10.6 7.4"/><path d="M2.4 11.2V12.4Q2.4 13.8 3.8 13.8H12.2Q13.6 13.8 13.6 12.4V11.2"/></svg>

<!-- t3 -->
<div class="a" style="left:944px;top:569px;width:32px;height:32px;border-radius:50%;background:#f2f2f2;border:1px solid #e5e5e5"></div>
<div class="t" style="left:944px;top:576px;width:32px;text-align:center;font-size:10.5px;color:#6b6b6b">JO</div>
<div class="t" style="left:989.10px;top:569px;font-size:14px;letter-spacing:0.164px;-webkit-text-stroke:0.28px">jordan@st...</div>
<div class="t" style="left:1076.70px;top:569px;font-size:11px;color:#2cbf84;letter-spacing:-0.188px;-webkit-text-stroke:0.05px">Completed</div>
<div class="t" style="left:1141.70px;top:571px;font-size:11px;color:#8a8a8a;letter-spacing:-0.230px">2 hours ago</div>
<div class="t" style="left:987.10px;top:587px;font-size:12.5px;color:#737373;letter-spacing:-0.033px">Nike_Summer_v7.mp4 ...</div>
<div class="a" style="left:1206px;top:569px;width:24px;height:24px;border-radius:7px;background:#e8f0fe"></div>
<svg class="ic" style="left:1212px;top:575px;color:#4a8af4" width="12" height="12" viewBox="0 0 16 16" stroke-width="1.4"><path d="M8 2.2V9.8M5.4 7.4L8 10L10.6 7.4"/><path d="M2.4 11.2V12.4Q2.4 13.8 3.8 13.8H12.2Q13.6 13.8 13.6 12.4V11.2"/></svg>

<!-- t4 -->
<div class="a" style="left:944px;top:617px;width:32px;height:32px;border-radius:50%;background:#f2f2f2;border:1px solid #e5e5e5"></div>
<div class="t" style="left:944px;top:624px;width:32px;text-align:center;font-size:10.5px;color:#6b6b6b">JO</div>
<div class="t" style="left:989.10px;top:617px;font-size:14px;letter-spacing:0.164px;-webkit-text-stroke:0.28px">jordan@st...</div>
<div class="t" style="left:1076.70px;top:618px;font-size:11px;color:#2cbf84;letter-spacing:-0.188px;-webkit-text-stroke:0.05px">Completed</div>
<div class="t" style="left:1140.80px;top:620px;font-size:11px;color:#8a8a8a;letter-spacing:-0.140px">4 hours ago</div>
<div class="t" style="left:988.10px;top:634px;font-size:12.5px;color:#737373;letter-spacing:-0.035px">Ocean_Doc_Assembly...</div>
<div class="a" style="left:1206px;top:617px;width:24px;height:24px;border-radius:7px;background:#e3f8ee"></div>
<svg class="ic" style="left:1212px;top:623px;color:#34c38a" width="12" height="12" viewBox="0 0 16 16" stroke-width="1.4"><path d="M8 10.2V2.4M5.4 4.9L8 2.3L10.6 4.9"/><path d="M2.4 11.2V12.4Q2.4 13.8 3.8 13.8H12.2Q13.6 13.8 13.6 12.4V11.2"/></svg>

</body></html>
